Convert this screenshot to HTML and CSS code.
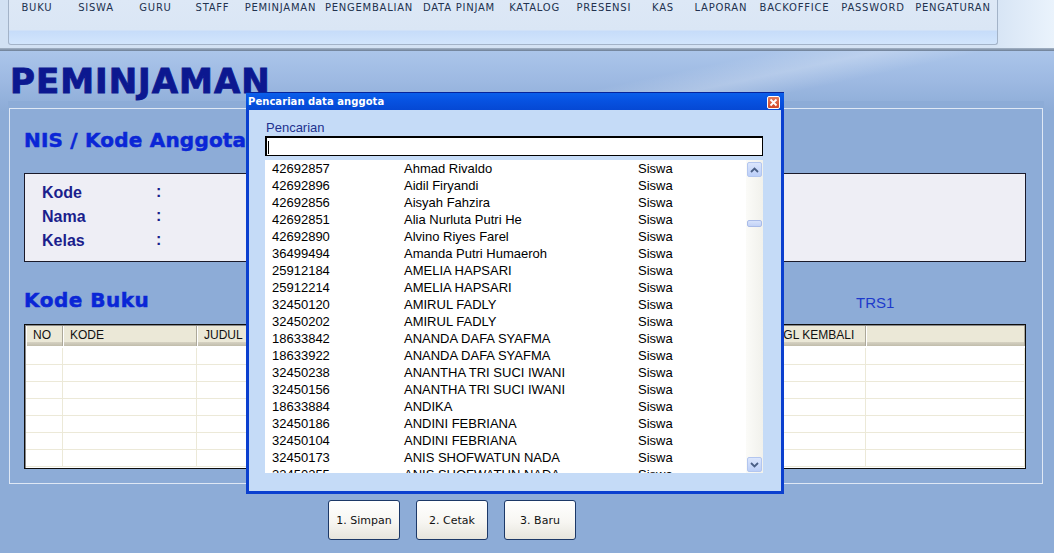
FILE: index.html
```html
<!DOCTYPE html>
<html>
<head>
<meta charset="utf-8">
<title>Peminjaman</title>
<link rel="stylesheet" href="styles.css">
</head>
<body>
<header class="topbar">
  <nav class="menu">
    <div class="menu-items">
      <div class="mi"><span>BUKU</span></div>
      <div class="mi"><span>SISWA</span></div>
      <div class="mi"><span>GURU</span></div>
      <div class="mi"><span>STAFF</span></div>
      <div class="mi"><span>PEMINJAMAN</span></div>
      <div class="mi"><span>PENGEMBALIAN</span></div>
      <div class="mi"><span>DATA PINJAM</span></div>
      <div class="mi"><span>KATALOG</span></div>
      <div class="mi"><span>PRESENSI</span></div>
      <div class="mi"><span>KAS</span></div>
      <div class="mi"><span>LAPORAN</span></div>
      <div class="mi"><span>BACKOFFICE</span></div>
      <div class="mi"><span>PASSWORD</span></div>
      <div class="mi"><span>PENGATURAN</span></div>
    </div>
  </nav>
</header>
<div class="topline"></div>
<main class="stage">
  <h1 class="title">PEMINJAMAN</h1>
  <section class="panel">
    <div class="group">
      <h2 class="heading heading-nis">NIS / Kode Anggota</h2>
      <div class="infobox">
        <div class="info-row"><span class="lbl">Kode</span><span class="colon">:</span></div>
        <div class="info-row"><span class="lbl">Nama</span><span class="colon">:</span></div>
        <div class="info-row"><span class="lbl">Kelas</span><span class="colon">:</span></div>
      </div>
      <div class="book-row">
        <h2 class="heading heading-book">Kode Buku</h2>
        <span class="trs">TRS1</span>
      </div>
      <div class="grid">
        <div class="grid-head">
          <div class="hc c-no">NO</div>
          <div class="hc c-kode">KODE</div>
          <div class="hc c-judul">JUDUL</div>
          <div class="hc c-tgl">TGL KEMBALI</div>
          <div class="hc c-last"></div>
        </div>
        <div class="grid-body">
          <div class="grow"><div class="gc c-no"></div><div class="gc c-kode"></div><div class="gc c-judul"></div><div class="gc c-tgl"></div><div class="gc c-last"></div></div>
          <div class="grow"><div class="gc c-no"></div><div class="gc c-kode"></div><div class="gc c-judul"></div><div class="gc c-tgl"></div><div class="gc c-last"></div></div>
          <div class="grow"><div class="gc c-no"></div><div class="gc c-kode"></div><div class="gc c-judul"></div><div class="gc c-tgl"></div><div class="gc c-last"></div></div>
          <div class="grow"><div class="gc c-no"></div><div class="gc c-kode"></div><div class="gc c-judul"></div><div class="gc c-tgl"></div><div class="gc c-last"></div></div>
          <div class="grow"><div class="gc c-no"></div><div class="gc c-kode"></div><div class="gc c-judul"></div><div class="gc c-tgl"></div><div class="gc c-last"></div></div>
          <div class="grow"><div class="gc c-no"></div><div class="gc c-kode"></div><div class="gc c-judul"></div><div class="gc c-tgl"></div><div class="gc c-last"></div></div>
          <div class="grow"><div class="gc c-no"></div><div class="gc c-kode"></div><div class="gc c-judul"></div><div class="gc c-tgl"></div><div class="gc c-last"></div></div>
        </div>
      </div>
    </div>
  </section>
  <div class="actions">
    <button class="btn">1. Simpan</button>
    <button class="btn">2. Cetak</button>
    <button class="btn">3. Baru</button>
  </div>
</main>

<div class="dialog">
  <div class="dlg-title">
    <span class="dlg-caption">Pencarian data anggota</span>
    <span class="dlg-close"><svg width="9" height="9" viewBox="0 0 9 9"><path d="M1.5 1.5 L7.5 7.5 M7.5 1.5 L1.5 7.5" stroke="#fff" stroke-width="1.8" fill="none"/></svg></span>
  </div>
  <div class="dlg-body">
    <label class="dlg-label">Pencarian</label>
    <div class="dlg-input"><span class="caret"></span></div>
    <div class="listbox">
      <div class="list-rows">
        <div class="lrow"><span>42692857</span><span>Ahmad Rivaldo</span><span>Siswa</span></div>
        <div class="lrow"><span>42692896</span><span>Aidil Firyandi</span><span>Siswa</span></div>
        <div class="lrow"><span>42692856</span><span>Aisyah Fahzira</span><span>Siswa</span></div>
        <div class="lrow"><span>42692851</span><span>Alia Nurluta Putri He</span><span>Siswa</span></div>
        <div class="lrow"><span>42692890</span><span>Alvino Riyes Farel</span><span>Siswa</span></div>
        <div class="lrow"><span>36499494</span><span>Amanda Putri Humaeroh</span><span>Siswa</span></div>
        <div class="lrow"><span>25912184</span><span>AMELIA HAPSARI</span><span>Siswa</span></div>
        <div class="lrow"><span>25912214</span><span>AMELIA HAPSARI</span><span>Siswa</span></div>
        <div class="lrow"><span>32450120</span><span>AMIRUL FADLY</span><span>Siswa</span></div>
        <div class="lrow"><span>32450202</span><span>AMIRUL FADLY</span><span>Siswa</span></div>
        <div class="lrow"><span>18633842</span><span>ANANDA DAFA SYAFMA</span><span>Siswa</span></div>
        <div class="lrow"><span>18633922</span><span>ANANDA DAFA SYAFMA</span><span>Siswa</span></div>
        <div class="lrow"><span>32450238</span><span>ANANTHA TRI SUCI IWANI</span><span>Siswa</span></div>
        <div class="lrow"><span>32450156</span><span>ANANTHA TRI SUCI IWANI</span><span>Siswa</span></div>
        <div class="lrow"><span>18633884</span><span>ANDIKA</span><span>Siswa</span></div>
        <div class="lrow"><span>32450186</span><span>ANDINI FEBRIANA</span><span>Siswa</span></div>
        <div class="lrow"><span>32450104</span><span>ANDINI FEBRIANA</span><span>Siswa</span></div>
        <div class="lrow"><span>32450173</span><span>ANIS SHOFWATUN NADA</span><span>Siswa</span></div>
        <div class="lrow"><span>32450255</span><span>ANIS SHOFWATUN NADA</span><span>Siswa</span></div>
      </div>
      <div class="vscroll">
        <div class="sbtn"><svg width="9" height="6" viewBox="0 0 9 6"><polyline points="1,5 4.5,1.5 8,5" fill="none" stroke="#4a5f86" stroke-width="1.8"/></svg></div>
        <div class="thumb"></div>
        <div class="sbtn sbtn-down"><svg width="9" height="6" viewBox="0 0 9 6"><polyline points="1,1 4.5,4.5 8,1" fill="none" stroke="#4a5f86" stroke-width="1.8"/></svg></div>
      </div>
    </div>
  </div>
</div>
</body>
</html>
```

FILE: styles.css
```css
html, body {
  margin: 0;
  padding: 0;
}
body {
  width: 1054px;
  height: 553px;
  overflow: hidden;
  background: #8dacd7;
  font-family: "Liberation Sans", Arial, sans-serif;
}

/* ---------- top menu ---------- */
.topbar {
  height: 48px;
  display: flex;
  background: linear-gradient(to right, #d2e1f3 0, #d5e3f4 990px, #eaf3fc 1054px);
}
.menu {
  margin-left: 8px;
  width: 990px;
  height: 45px;
  box-sizing: border-box;
  border: 1px solid #a3b3c8;
  border-top: 0;
  border-radius: 0 0 3px 3px;
  background: linear-gradient(to bottom, #dde8f6 0, #dae6f5 30px, #c6dcf9 31px, #d2e5fc 44px);
}
/* each track starts at the centre of one menu label */
.menu-items {
  display: grid;
  grid-template-columns: 59.1px 59.5px 57px 67.9px 88.6px 90px 75.6px 69.2px 59.2px 57.9px 73.6px 78.5px 80px 40px;
  padding: 2px 0 0 27.9px;
}
.mi {
  width: 0;
  display: flex;
  justify-content: center;
}
.mi span {
  font-family: "DejaVu Sans", sans-serif;
  font-size: 10px;
  line-height: 12px;
  letter-spacing: 0.75px;
  color: #22324f;
  white-space: nowrap;
}
.topline {
  height: 3px;
  background: linear-gradient(to bottom, #a5b4c6, #6c7e97);
}

/* ---------- stage ---------- */
.stage {
  height: 502px;
  background:
    linear-gradient(168deg, rgba(255,255,255,0) 0, rgba(255,255,255,0) 58%, rgba(255,255,255,0.22) 66%, rgba(255,255,255,0) 74%),
    linear-gradient(to bottom, #abc5ea 0, #9db9e2 30px, #8dacd7 60px);
  background-repeat: no-repeat;
  background-size: 1054px 60px, 1054px 502px;
}
.title {
  margin: 0;
  padding: 10px 0 0 10px;
  height: 40px;
  font-family: "DejaVu Sans", sans-serif;
  font-weight: bold;
  font-size: 34px;
  line-height: 40px;
  letter-spacing: 1px;
  color: #0c1890;
  -webkit-text-stroke: 0.9px #0c1890;
}
.panel {
  margin-left: 8px;
  width: 1036px;
  box-sizing: border-box;
  padding: 7px 0 1px 1px;
  background: #8dacd7;
}
.group {
  width: 1034px;
  box-sizing: border-box;
  border: 1px solid #dfe8f5;
  padding: 19px 16px 14px 14px;
}
.heading {
  margin: 0;
  font-family: "DejaVu Sans", sans-serif;
  font-weight: bold;
  font-size: 20px;
  line-height: 24px;
  color: #0a26d6;
  -webkit-text-stroke: 0.5px #0a26d6;
  white-space: nowrap;
}
.heading-nis {
  letter-spacing: 0.2px;
}
.infobox {
  margin-top: 21px;
  height: 89px;
  box-sizing: border-box;
  border: 1px solid #1a1a2a;
  background: #eeeef5;
  padding: 7px 0 0 17px;
}
.info-row {
  display: flex;
  height: 24px;
}
.lbl {
  width: 114px;
  font-weight: bold;
  font-size: 16px;
  line-height: 24px;
  color: #1b1e8c;
}
.colon {
  font-weight: bold;
  font-size: 16px;
  line-height: 22px;
  color: #1b1e8c;
}
.book-row {
  margin-top: 26px;
  display: flex;
  align-items: flex-end;
}
.heading-book {
  width: 832px;
  letter-spacing: 0.5px;
}
.trs {
  font-size: 15px;
  line-height: 17px;
  padding-bottom: 1px;
  color: #1d3acb;
}

/* ---------- data grid ---------- */
.grid {
  margin-top: 12px;
  height: 145px;
  box-sizing: border-box;
  border: 1px solid #0d0d0d;
  box-shadow: inset 1px 1px 0 #8a8a8a;
  padding: 1px 0 0 1px;
  background: #fff;
  overflow: hidden;
}
.grid-head {
  display: flex;
  height: 20px;
}
.c-no { width: 37px; }
.c-kode { width: 134px; }
.c-judul { width: 572px; }
.c-tgl { width: 97px; }
.c-last { width: 159px; }
.hc {
  box-sizing: border-box;
  height: 20px;
  padding-left: 7px;
  border-right: 1px solid #aca899;
  box-shadow: inset 1px 0 0 #fff;
  background: linear-gradient(to bottom, #ebe8d7 0, #ebe8d7 16px, #d6d2c2 16px, #cbc7b8 18px, #c1bdab 20px);
  font-size: 12px;
  line-height: 19px;
  color: #111;
  white-space: nowrap;
  overflow: hidden;
}
.grid-body {
  padding-top: 2px;
}
.grow {
  display: flex;
  height: 17px;
  box-sizing: border-box;
  border-bottom: 1px solid #ece9d8;
}
.gc {
  box-sizing: border-box;
  border-right: 1px solid #ece9d8;
}

/* ---------- buttons ---------- */
.actions {
  display: flex;
  gap: 16px;
  padding-left: 328px;
  margin-top: 15px;
}
.btn {
  width: 72px;
  height: 40px;
  box-sizing: border-box;
  border: 1px solid #1c3867;
  border-radius: 3px;
  background: linear-gradient(to bottom, #ffffff 0, #f7f6f2 55%, #e6e4dc 100%);
  font-family: "DejaVu Sans", sans-serif;
  font-size: 11px;
  color: #111;
  padding: 0;
}

/* ---------- dialog (overlay) ---------- */
.dialog {
  position: absolute;
  left: 246px;
  top: 92px;
  width: 538px;
  height: 402px;
}
.dlg-title {
  height: 18px;
  box-sizing: border-box;
  border-top: 1px solid #06249a;
  background: linear-gradient(to bottom, #0a5fea 0, #0753e2 40%, #0548d4 100%);
  display: flex;
  align-items: center;
  justify-content: space-between;
  padding: 0 4px 0 2px;
}
.dlg-caption {
  font-family: "DejaVu Sans", sans-serif;
  font-weight: bold;
  font-size: 10px;
  letter-spacing: 0.05px;
  color: #fff;
  line-height: 14px;
}
.dlg-close {
  width: 13px;
  height: 13px;
  box-sizing: border-box;
  border: 1px solid #fff;
  border-radius: 2px;
  background: linear-gradient(to bottom, #e27a5a, #d2482a);
  display: flex;
  align-items: center;
  justify-content: center;
  margin-top: 1px;
}
.dlg-body {
  height: 384px;
  box-sizing: border-box;
  border: 3px solid #0a3fcf;
  border-top: 0;
  background: #c5dbf7;
  padding: 10px 18px 0 16px;
}
.dlg-label {
  display: block;
  padding-left: 1px;
  font-size: 13px;
  line-height: 16px;
  color: #22328f;
}
.dlg-input {
  height: 20px;
  box-sizing: border-box;
  border: 1px solid #000;
  border-top-width: 2px;
  border-left-width: 2px;
  background: #fff;
  padding: 3px 0 0 1px;
}
.caret {
  display: block;
  width: 1px;
  height: 13px;
  background: #000;
}
.listbox {
  margin-top: 4px;
  height: 313px;
  background: #fff;
  display: flex;
  overflow: hidden;
}
.list-rows {
  flex: 1;
  overflow: hidden;
}
.lrow {
  display: grid;
  grid-template-columns: 132px 234px 1fr;
  padding-left: 7px;
  height: 17px;
  font-size: 13px;
  line-height: 18px;
  color: #000;
  white-space: nowrap;
}
.vscroll {
  width: 17px;
  box-sizing: border-box;
  padding: 2px 1px 1px 1px;
  background: linear-gradient(to right, #fbfbf8, #f1f1ec);
  display: flex;
  flex-direction: column;
}
.sbtn {
  height: 15px;
  box-sizing: border-box;
  border: 1px solid #b3c6ef;
  border-radius: 2px;
  background: linear-gradient(to bottom, #dbe6fd, #bccff8);
  display: flex;
  align-items: center;
  justify-content: center;
}
.thumb {
  margin-top: 43px;
  height: 7px;
  box-sizing: border-box;
  border: 1px solid #a9bbe8;
  border-radius: 2px;
  background: linear-gradient(to bottom, #d7e2fb, #c2d2f6);
}
.sbtn-down {
  margin-top: auto;
}
```
